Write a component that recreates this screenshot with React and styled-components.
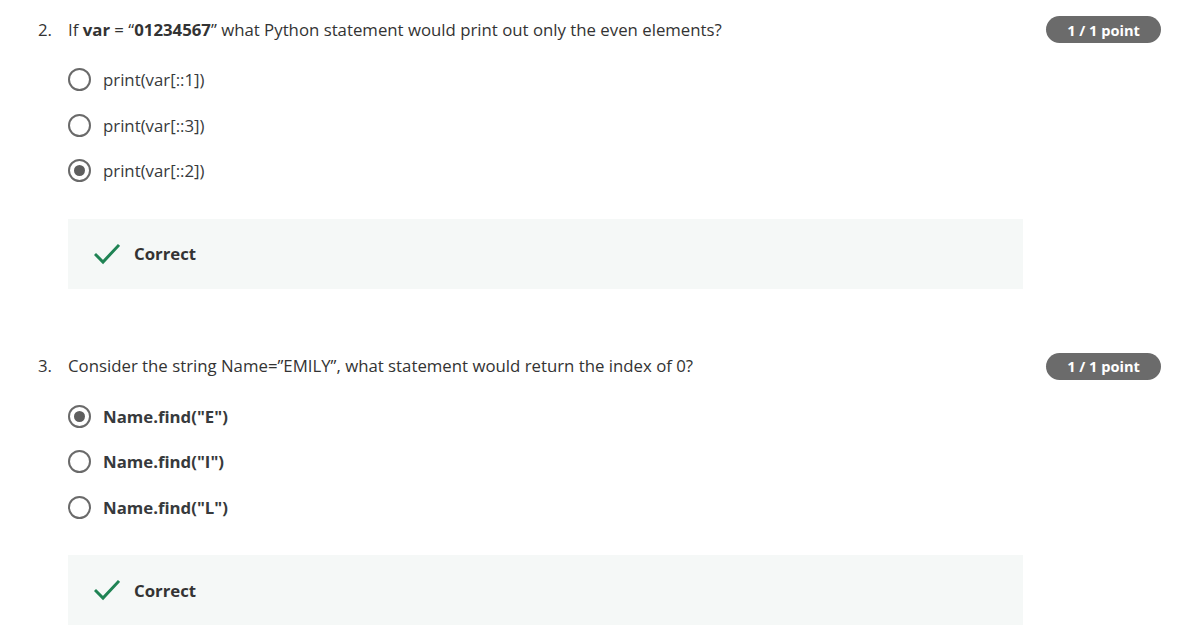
import React from "react";
import styled, { createGlobalStyle } from "styled-components";

const Global = createGlobalStyle`
  html, body { margin: 0; padding: 0; background: #ffffff; }
  body { font-family: "Open Sans", "Noto Sans", sans-serif; color: #1f1f1f; }
  * { box-sizing: border-box; }
`;

const Page = styled.div`
  padding: 16px 17px 0 38px;
  width: 1178px;
`;

const Question = styled.section`
  margin-bottom: ${(p) => (p.$last ? "0" : "64px")};
`;

const Header = styled.div`
  display: flex;
  align-items: center;
  justify-content: space-between;
`;

const Prompt = styled.div`
  display: flex;
  font-size: 16.8px;
  line-height: 24px;
  color: #333333;
  b { font-weight: 700; }
`;

const Num = styled.span`
  width: 30px;
  flex: none;
`;

const Badge = styled.span`
  display: inline-flex;
  align-items: center;
  justify-content: center;
  width: 115px;
  height: 27px;
  border-radius: 14px;
  background: #6b6b6b;
  color: #ffffff;
  font-size: 14.6px;
  font-weight: 700;
`;

const Options = styled.div`
  margin: 14px 0 0 30px;
  display: flex;
  flex-direction: column;
`;

const Option = styled.label`
  display: flex;
  align-items: center;
  height: 45.5px;
  font-size: 16.8px;
  color: #373a3c;
  font-weight: ${(p) => (p.$bold ? 700 : 400)};
`;

const Radio = styled.span`
  width: 23px;
  height: 23px;
  border-radius: 50%;
  border: 2px solid #6a6a6a;
  margin-right: 12px;
  display: flex;
  align-items: center;
  justify-content: center;
  flex: none;
  &::after {
    content: "";
    display: ${(p) => (p.$checked ? "block" : "none")};
    width: 11px;
    height: 11px;
    border-radius: 50%;
    background: #5e5e5e;
  }
`;

const Feedback = styled.div`
  margin: 25px 0 0 30px;
  width: 955px;
  height: 70px;
  background: #f5f8f7;
  display: flex;
  align-items: center;
  padding-left: 26px;
  font-size: 16.8px;
  font-weight: 700;
  color: #333333;
`;

const Check = () => (
  <svg width="26" height="22" viewBox="0 0 26 22" style={{ marginRight: 14 }}>
    <path d="M2 12 L9 19 L24 3" fill="none" stroke="#1f8354" strokeWidth="3" strokeLinecap="square" />
  </svg>
);

const data = [
  {
    n: "2.",
    prompt: (
      <span>
        If <b>var</b> = “<b>01234567</b>” what Python statement would print out only the even elements?
      </span>
    ),
    bold: false,
    options: ["print(var[::1])", "print(var[::3])", "print(var[::2])"],
    checked: 2,
  },
  {
    n: "3.",
    prompt: <span>Consider the string Name=”EMILY”, what statement would return the index of 0?</span>,
    bold: true,
    options: ['Name.find("E")', 'Name.find("I")', 'Name.find("L")'],
    checked: 0,
  },
];

export default function App() {
  return (
    <>
      <Global />
      <Page>
        {data.map((q, qi) => (
          <Question key={q.n} $last={qi === data.length - 1}>
            <Header>
              <Prompt>
                <Num>{q.n}</Num>
                {q.prompt}
              </Prompt>
              <Badge>1 / 1 point</Badge>
            </Header>
            <Options>
              {q.options.map((o, i) => (
                <Option key={o} $bold={q.bold}>
                  <Radio $checked={i === q.checked} />
                  {o}
                </Option>
              ))}
            </Options>
            <Feedback>
              <Check />
              Correct
            </Feedback>
          </Question>
        ))}
      </Page>
    </>
  );
}
